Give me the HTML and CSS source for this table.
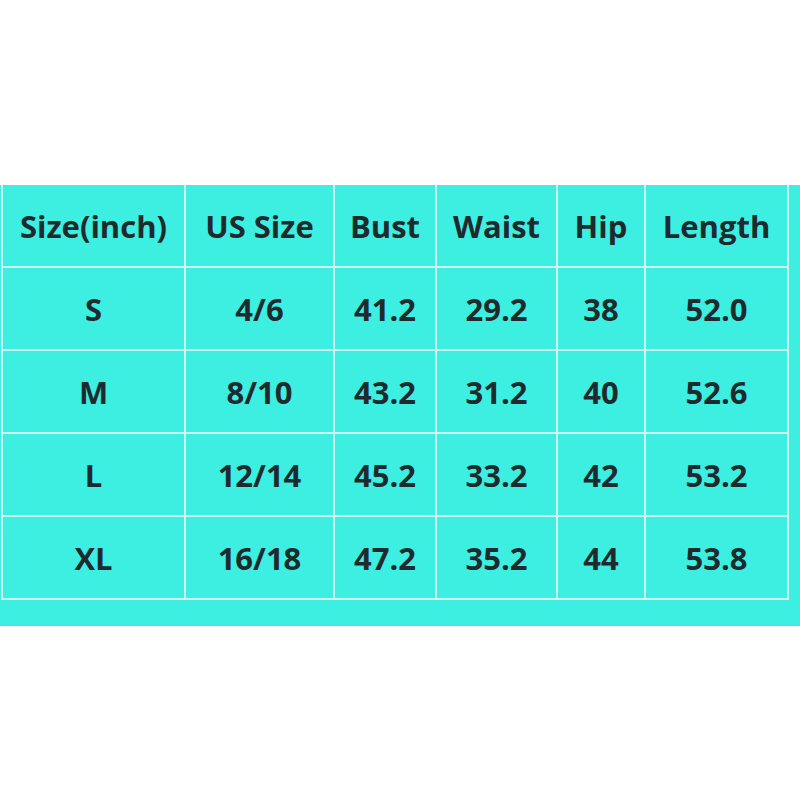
FILE: index.html
```html
<!DOCTYPE html>
<html>
<head>
<meta charset="utf-8">
<link rel="stylesheet" href="styles.css">
</head>
<body>
<div class="band">
  <table class="sizes">
    <colgroup>
      <col class="c1"><col class="c2"><col class="c3"><col class="c4"><col class="c5"><col class="c6">
    </colgroup>
    <tr class="head"><td>Size(inch)</td><td>US Size</td><td>Bust</td><td>Waist</td><td>Hip</td><td>Length</td></tr>
    <tr><td>S</td><td>4/6</td><td>41.2</td><td>29.2</td><td>38</td><td>52.0</td></tr>
    <tr><td>M</td><td>8/10</td><td>43.2</td><td>31.2</td><td>40</td><td>52.6</td></tr>
    <tr><td>L</td><td>12/14</td><td>45.2</td><td>33.2</td><td>42</td><td>53.2</td></tr>
    <tr class="last"><td>XL</td><td>16/18</td><td>47.2</td><td>35.2</td><td>44</td><td>53.8</td></tr>
  </table>
</div>
</body>
</html>
```

FILE: styles.css
```css
html, body {
  margin: 0;
  padding: 0;
  background: #ffffff;
}
.band {
  margin-top: 185px;
  height: 441px;
  background: #3cefe0;
  padding-left: 1px;
  box-sizing: border-box;
}
.sizes {
  border-collapse: collapse;
  table-layout: fixed;
  width: 788px;
  font-family: "Open Sans", "Noto Sans", sans-serif;
  font-weight: 700;
  font-size: 31px;
  color: #1e2a2e;
}
.c1 { width: 183px; }
.c2 { width: 149px; }
.c3 { width: 102px; }
.c4 { width: 121px; }
.c5 { width: 88px; }
.c6 { width: 143px; }
.sizes td {
  border: 2px solid #cdf6f2;
  height: 81px;
  padding: 0;
  text-align: center;
  vertical-align: middle;
  white-space: nowrap;
}
.sizes tr.head td {
  border-top: none;
}
```
